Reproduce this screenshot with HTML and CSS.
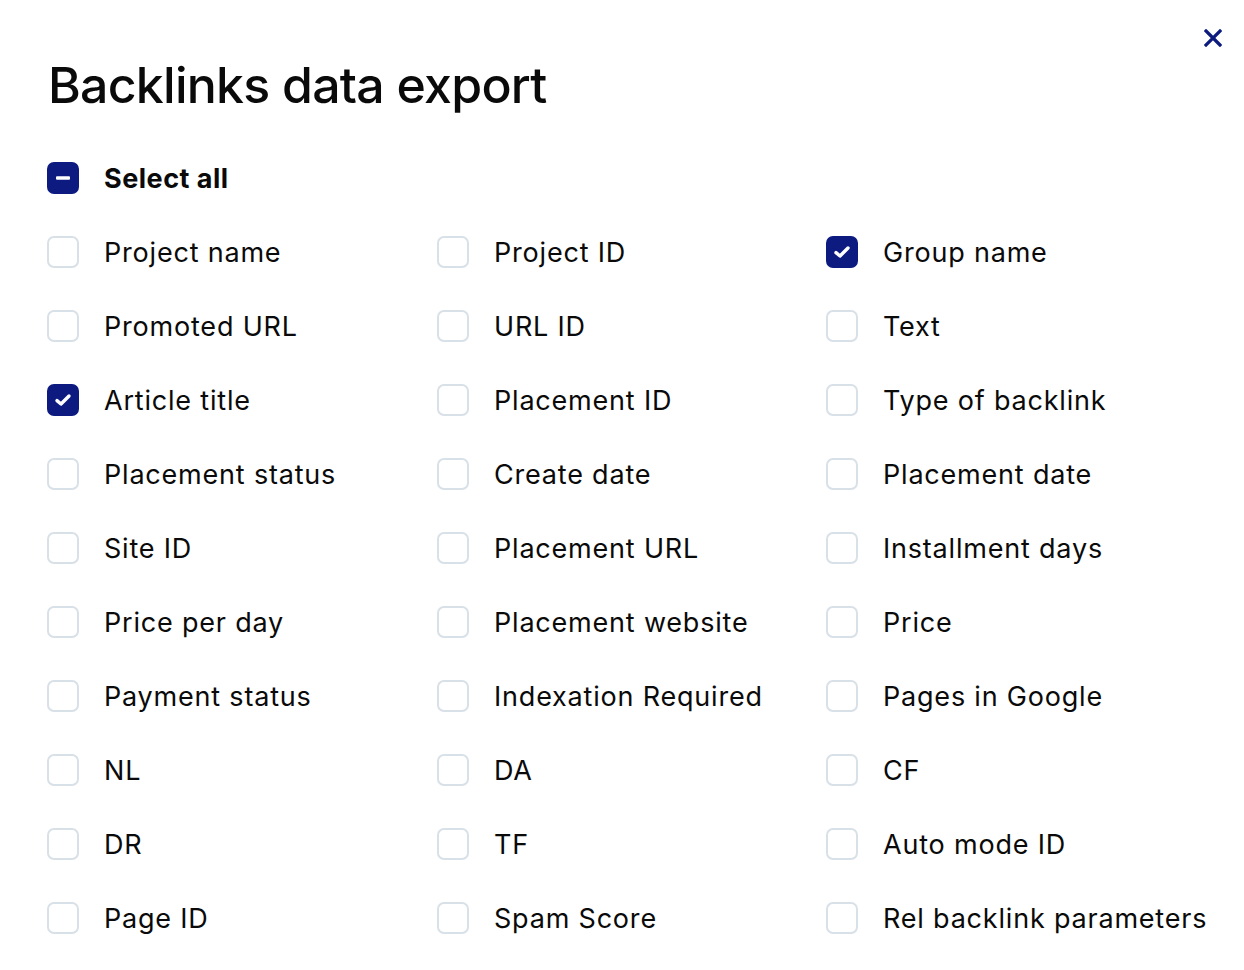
FILE: index.html
```html
<!DOCTYPE html>
<html lang="en">
<head>
<meta charset="utf-8">
<title>Backlinks data export</title>
<link rel="stylesheet" href="styles.css">
</head>
<body>
<div class="modal">
  <button class="close" aria-label="Close">
    <svg width="18" height="18" viewBox="0 0 18 18"><path d="M2 2L16 16M16 2L2 16" stroke="#0d1b7e" stroke-width="3.2" stroke-linecap="square" fill="none"/></svg>
  </button>
  <h1 class="title">Backlinks data export</h1>
  <div class="grid">
    <label class="item all"><span class="box on"><svg width="14" height="4" viewBox="0 0 14 4"><rect x="0" y="0.3" width="14" height="3.4" rx="1" fill="#fff"/></svg></span><span class="txt bold">Select all</span></label>

    <label class="item"><span class="box"></span><span class="txt">Project name</span></label>
    <label class="item"><span class="box"></span><span class="txt">Project ID</span></label>
    <label class="item"><span class="box on"><svg class="chk" width="20" height="16" viewBox="0 0 20 16"><path d="M4 8.6L8 12L16 4" stroke="#fff" stroke-width="3.4" stroke-linecap="round" stroke-linejoin="round" fill="none"/></svg></span><span class="txt">Group name</span></label>

    <label class="item"><span class="box"></span><span class="txt">Promoted URL</span></label>
    <label class="item"><span class="box"></span><span class="txt">URL ID</span></label>
    <label class="item"><span class="box"></span><span class="txt">Text</span></label>

    <label class="item"><span class="box on"><svg class="chk" width="20" height="16" viewBox="0 0 20 16"><path d="M4 8.6L8 12L16 4" stroke="#fff" stroke-width="3.4" stroke-linecap="round" stroke-linejoin="round" fill="none"/></svg></span><span class="txt">Article title</span></label>
    <label class="item"><span class="box"></span><span class="txt">Placement ID</span></label>
    <label class="item"><span class="box"></span><span class="txt">Type of backlink</span></label>

    <label class="item"><span class="box"></span><span class="txt">Placement status</span></label>
    <label class="item"><span class="box"></span><span class="txt">Create date</span></label>
    <label class="item"><span class="box"></span><span class="txt">Placement date</span></label>

    <label class="item"><span class="box"></span><span class="txt">Site ID</span></label>
    <label class="item"><span class="box"></span><span class="txt">Placement URL</span></label>
    <label class="item"><span class="box"></span><span class="txt">Installment days</span></label>

    <label class="item"><span class="box"></span><span class="txt">Price per day</span></label>
    <label class="item"><span class="box"></span><span class="txt">Placement website</span></label>
    <label class="item"><span class="box"></span><span class="txt">Price</span></label>

    <label class="item"><span class="box"></span><span class="txt">Payment status</span></label>
    <label class="item"><span class="box"></span><span class="txt">Indexation Required</span></label>
    <label class="item"><span class="box"></span><span class="txt">Pages in Google</span></label>

    <label class="item"><span class="box"></span><span class="txt">NL</span></label>
    <label class="item"><span class="box"></span><span class="txt">DA</span></label>
    <label class="item"><span class="box"></span><span class="txt">CF</span></label>

    <label class="item"><span class="box"></span><span class="txt">DR</span></label>
    <label class="item"><span class="box"></span><span class="txt">TF</span></label>
    <label class="item"><span class="box"></span><span class="txt">Auto mode ID</span></label>

    <label class="item"><span class="box"></span><span class="txt">Page ID</span></label>
    <label class="item"><span class="box"></span><span class="txt">Spam Score</span></label>
    <label class="item"><span class="box"></span><span class="txt">Rel backlink parameters</span></label>
  </div>
</div>
</body>
</html>
```

FILE: styles.css
```css
* { box-sizing: border-box; }
html, body { margin: 0; padding: 0; background: #fff; }
body {
  font-family: Inter, "Noto Sans", "Liberation Sans", sans-serif;
  color: #0a0a0a;
}
.modal {
  position: relative;
  width: 1244px;
  min-height: 970px;
  padding: 54px 0 0 47px;
}
.close {
  position: absolute;
  top: 29px;
  right: 22px;
  width: 18px;
  height: 18px;
  padding: 0;
  border: 0;
  background: none;
  display: flex;
}
.title {
  margin: 0 0 0 1px;
  font-size: 50px;
  font-weight: 500;
  line-height: 62px;
  letter-spacing: -0.75px;
}
.grid {
  margin-top: 46px;
  display: grid;
  grid-template-columns: 390px 389px 390px;
  grid-auto-rows: 32px;
  row-gap: 42px;
}
.item {
  display: flex;
  align-items: center;
  gap: 25px;
  height: 32px;
}
.item.all { grid-column: 1 / 4; }
.box {
  flex: none;
  width: 32px;
  height: 32px;
  border: 2px solid #d8e0e8;
  border-radius: 7px;
  display: flex;
  align-items: center;
  justify-content: center;
  background: #fff;
}
.box.on {
  background: #0d1b80;
  border-color: #0d1b80;
}
.txt {
  font-size: 27px;
  line-height: 32px;
  padding-top: 2px;
  letter-spacing: 0.8px;
  white-space: nowrap;
}
.txt.bold { font-weight: 700; letter-spacing: 0.5px; }
```
